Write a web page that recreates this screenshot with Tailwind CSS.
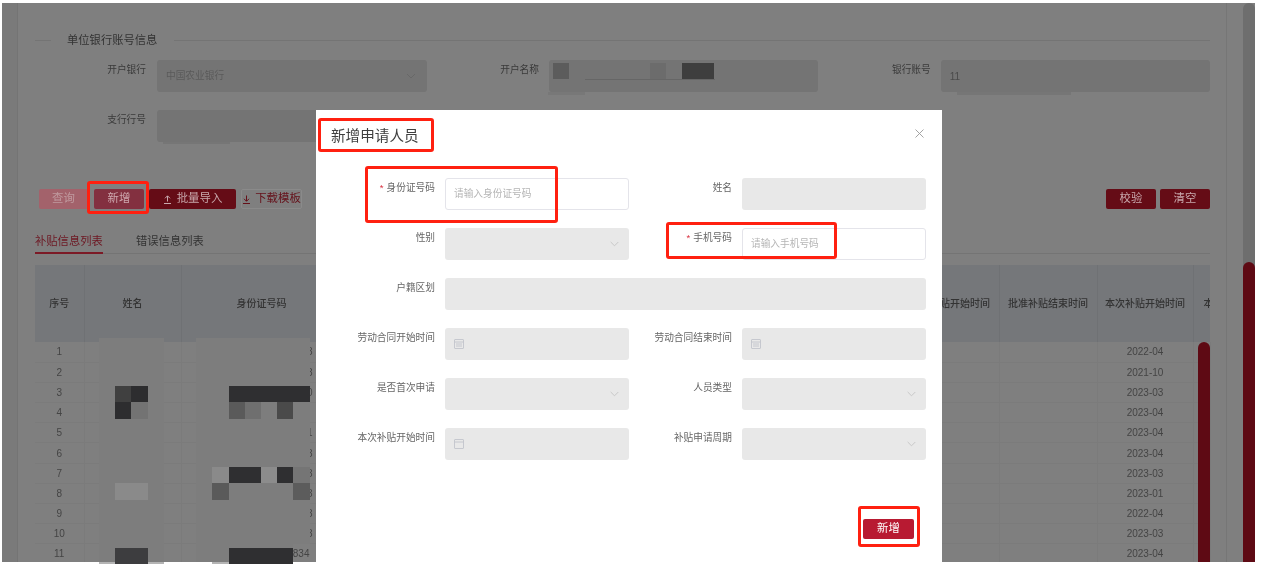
<!DOCTYPE html>
<html lang="zh-CN">
<head>
    <meta charset="UTF-8">
    <title>新增申请人员</title>
    <script src="https://cdn.jsdelivr.net/npm/@tailwindcss/browser@4"></script>
</head>
<body class="bg-white font-['Liberation_Sans','Noto_Sans_CJK_SC',sans-serif]">
<div class="relative w-[1280px] h-[577px] bg-white overflow-hidden blur-[0.6px]">

    <!-- dimmed page behind the dialog -->
    <div class="ml-[2px] pt-[3px]">
        <div class="flex w-[1253px] h-[559px] bg-[#7f7f7f] overflow-hidden text-[#3d3d3d]">
            <div class="w-[16px] shrink-0 bg-[#7a7a7a] border-r border-[#747474]"></div>

            <div class="w-[1208px] shrink-0 pl-[17px] pr-[16px] pt-[29px]">
                <div class="flex items-center h-[16px]">
                    <div class="w-[16px] h-px bg-[#747474]"></div>
                    <div class="w-[123px] pl-[16px] text-[11.3px] text-[#333]">单位银行账号信息</div>
                    <div class="flex-1 h-px bg-[#747474]"></div>
                </div>

                <div class="mt-[12px] grid grid-cols-[392px_391px_392px] h-[32px]">
                    <div class="flex">
                        <div class="w-[111px] pt-[3px] text-right text-[9.7px] leading-[14px] text-[#3a3a3a]">开户银行</div>
                        <div class="ml-[11px] w-[270px] h-[32px] rounded-[3px] bg-[#747474] flex items-center justify-between pl-[9px] pr-[11px] text-[9.7px] text-[#5a5a5a]">
                            中国农业银行
                            <svg class="w-[10px] h-[6px]" viewBox="0 0 10 6" fill="none" stroke="#646464" stroke-width="0.8"><path d="M1 1l4 4 4-4"/></svg>
                        </div>
                    </div>
                    <div class="flex">
                        <div class="w-[112px] pt-[3px] text-right text-[9.7px] leading-[14px] text-[#3a3a3a]">开户名称</div>
                        <div class="ml-[10px] w-[269px] h-[32px] rounded-[3px] bg-[#747474]"></div>
                    </div>
                    <div class="flex">
                        <div class="w-[113px] pt-[3px] text-right text-[9.7px] leading-[14px] text-[#3a3a3a]">银行账号</div>
                        <div class="ml-[10px] w-[270px] h-[32px] rounded-[3px] bg-[#747474] flex items-center pl-[9px] text-[10px] text-[#4a4a4a]">11</div>
                    </div>
                </div>

                <div class="mt-[18px] flex h-[32px]">
                    <div class="w-[111px] pt-[3px] text-right text-[9.7px] leading-[14px] text-[#3a3a3a]">支行行号</div>
                    <div class="ml-[11px] w-[270px] h-[32px] rounded-[3px] bg-[#747474]"></div>
                </div>

                <div class="mt-[47px] flex items-center h-[20px] text-[11.4px]">
                    <div class="ml-[4px] w-[49px] h-[20px] rounded-[2px] bg-[#a3626b] text-[#c09a9f] flex items-center justify-center">查询</div>
                    <div class="ml-[6px] w-[50px] h-[20px] rounded-[2px] bg-[#833040] text-[#cfa9b0] flex items-center justify-center">新增</div>
                    <div class="ml-[5px] w-[87px] h-[20px] rounded-[2px] bg-[#650c16] text-[#c9a9ad] flex items-center justify-center gap-[5px]">
                        <svg class="w-[9px] h-[9px]" viewBox="0 0 9 9" fill="none" stroke="#c9a9ad" stroke-width="1"><path d="M1 8.5h7M4.5 6.5V1M2 3.3l2.5-2.5L7 3.3"/></svg>
                        批量导入
                    </div>
                    <div class="ml-[5px] w-[61px] h-[20px] rounded-[2px] border border-[#8a8a8a] text-[#651019] flex items-center justify-center gap-[4px]">
                        <svg class="w-[9px] h-[9px]" viewBox="0 0 9 9" fill="none" stroke="#651019" stroke-width="1"><path d="M1 8.5h7M4.5 0.5V6M2 3.8l2.5 2.5L7 3.8"/></svg>
                        下载模板
                    </div>
                    <div class="ml-auto w-[50px] h-[20px] rounded-[2px] bg-[#650c16] text-[#c9a9ad] flex items-center justify-center">校验</div>
                    <div class="ml-[4px] w-[50px] h-[20px] rounded-[2px] bg-[#650c16] text-[#c9a9ad] flex items-center justify-center">清空</div>
                </div>

                <div class="mt-[22px] flex h-[23px] border-b border-[#747474] text-[11.3px]">
                    <div class="w-[68px] h-[23px] border-b-2 border-[#7c1a26] text-[#6d1722] leading-[20px]">补贴信息列表</div>
                    <div class="ml-[33px] text-[#333] leading-[20px]">错误信息列表</div>
                </div>

                <table class="mt-[11px] w-[1175px] table-fixed border-collapse text-center text-[10px] text-[#444]">
                    <colgroup>
                        <col class="w-[49px]"><col class="w-[97px]"><col class="w-[161px]">
                        <col class="w-[140px]"><col class="w-[140px]"><col class="w-[140px]"><col class="w-[139px]">
                        <col class="w-[98px]"><col class="w-[98px]"><col class="w-[96px]"><col class="w-[17px]">
                    </colgroup>
                    <thead class="bg-[#75777a] text-[#333]">
                        <tr class="h-[77px]">
                            <th class="border-r border-[#6f7174] font-medium">序号</th>
                            <th class="border-r border-[#6f7174] font-medium">姓名</th>
                            <th class="border-r border-[#6f7174] font-medium">身份证号码</th>
                            <th class="border-r border-[#6f7174]"></th>
                            <th class="border-r border-[#6f7174]"></th>
                            <th class="border-r border-[#6f7174]"></th>
                            <th class="border-r border-[#6f7174]"></th>
                            <th class="border-r border-[#6f7174] font-medium whitespace-nowrap">批准补贴开始时间</th>
                            <th class="border-r border-[#6f7174] font-medium whitespace-nowrap">批准补贴结束时间</th>
                            <th class="border-r border-[#6f7174] font-medium whitespace-nowrap">本次补贴开始时间</th>
                            <th class="font-medium overflow-hidden whitespace-nowrap text-left pl-[10px]">本</th>
                        </tr>
                    </thead>
                    <tbody class="[&_td]:border-r [&_td]:border-[#7b7b7b] [&_tr]:h-[20.2px] [&_tr]:border-b [&_tr]:border-[#7b7b7b]">
                        <tr><td>1</td><td></td><td class="text-right pr-[29px]">3</td><td></td><td></td><td></td><td></td><td></td><td></td><td>2022-04</td><td></td></tr>
                        <tr><td>2</td><td></td><td class="text-right pr-[29px]">8</td><td></td><td></td><td></td><td></td><td></td><td></td><td>2021-10</td><td></td></tr>
                        <tr><td>3</td><td></td><td class="text-right pr-[29px]">0</td><td></td><td></td><td></td><td></td><td></td><td></td><td>2023-03</td><td></td></tr>
                        <tr><td>4</td><td></td><td></td><td></td><td></td><td></td><td></td><td></td><td></td><td>2023-04</td><td></td></tr>
                        <tr><td>5</td><td></td><td class="text-right pr-[29px]">1</td><td></td><td></td><td></td><td></td><td></td><td></td><td>2023-04</td><td></td></tr>
                        <tr><td>6</td><td></td><td class="text-right pr-[29px]">3</td><td></td><td></td><td></td><td></td><td></td><td></td><td>2023-04</td><td></td></tr>
                        <tr><td>7</td><td></td><td class="text-right pr-[29px]">3</td><td></td><td></td><td></td><td></td><td></td><td></td><td>2023-03</td><td></td></tr>
                        <tr><td>8</td><td></td><td class="text-right pr-[29px]">3</td><td></td><td></td><td></td><td></td><td></td><td></td><td>2023-01</td><td></td></tr>
                        <tr><td>9</td><td></td><td class="text-right pr-[29px]">3</td><td></td><td></td><td></td><td></td><td></td><td></td><td>2022-04</td><td></td></tr>
                        <tr><td>10</td><td></td><td class="text-right pr-[29px]">3</td><td></td><td></td><td></td><td></td><td></td><td></td><td>2023-03</td><td></td></tr>
                        <tr><td>11</td><td></td><td class="text-right pr-[32px]">834</td><td></td><td></td><td></td><td></td><td></td><td></td><td>2023-04</td><td></td></tr>
                    </tbody>
                </table>
            </div>

            <div class="w-[17px] shrink-0 border-l border-[#767676]"></div>
            <div class="w-[12px] shrink-0 rounded-t-[6px] bg-[#6e6e6e] flex flex-col justify-end">
                <div class="h-[300px] rounded-t-[6px] bg-[#5e0a14]"></div>
            </div>
        </div>
    </div>

    <!-- table scrollbar thumb -->
    <div class="absolute left-[1198px] top-[342px] w-[12px] h-[220px] rounded-t-[6px] bg-[#5e0a14]"></div>

    <!-- masked values, laid over the page -->
    <div class="absolute left-[548px] top-[92px] w-[37px] h-[3px] bg-[#787878]"></div>
    <div class="absolute left-[553px] top-[63px] w-[16px] h-[16px] bg-[#5c5c5c]"></div>
    <div class="absolute left-[650px] top-[63px] w-[16px] h-[16px] bg-[#6c6c6c]"></div>
    <div class="absolute left-[682px] top-[63px] w-[32px] h-[16px] bg-[#3e3e3e]"></div>
    <div class="absolute left-[585px] top-[79px] w-[130px] h-px bg-[#666]"></div>
    <div class="absolute left-[163px] top-[142px] w-[67px] h-[2px] bg-[#767676]"></div>
    <div class="absolute left-[957px] top-[92px] w-[114px] h-[3px] bg-[#767676]"></div>

    <div class="absolute left-[99px] top-[338px] w-[65px] h-[224px] bg-[#7d7d7d]"></div>
    <div class="absolute left-[196px] top-[338px] w-[114px] h-[206px] bg-[#7d7d7d]"></div>
    <div class="absolute left-[196px] top-[544px] w-[97px] h-[18px] bg-[#7d7d7d]"></div>
    <div class="absolute left-[99px] top-[562px] w-[65px] h-[2px] bg-[#b4b4b4]"></div>
    <div class="absolute left-[212px] top-[562px] w-[81px] h-[2px] bg-[#b4b4b4]"></div>

    <div class="absolute left-[115px] top-[386px] w-[16px] h-[16px] bg-[#404040]"></div>
    <div class="absolute left-[131px] top-[386px] w-[17px] h-[16px] bg-[#2d2d2f]"></div>
    <div class="absolute left-[115px] top-[402px] w-[16px] h-[17px] bg-[#2d2d2f]"></div>
    <div class="absolute left-[131px] top-[402px] w-[17px] h-[17px] bg-[#737373]"></div>
    <div class="absolute left-[115px] top-[483px] w-[33px] h-[17px] bg-[#8a8a8a]"></div>
    <div class="absolute left-[115px] top-[548px] w-[33px] h-[16px] bg-[#3d3d3f]"></div>

    <div class="absolute left-[229px] top-[386px] w-[81px] h-[16px] bg-[#2f2f31]"></div>
    <div class="absolute left-[229px] top-[402px] w-[16px] h-[17px] bg-[#5a5a5a]"></div>
    <div class="absolute left-[245px] top-[402px] w-[16px] h-[17px] bg-[#6f6f6f]"></div>
    <div class="absolute left-[277px] top-[402px] w-[16px] h-[17px] bg-[#4a4a4a]"></div>
    <div class="absolute left-[212px] top-[467px] w-[17px] h-[16px] bg-[#8a8a8a]"></div>
    <div class="absolute left-[229px] top-[467px] w-[32px] h-[16px] bg-[#2f2f31]"></div>
    <div class="absolute left-[261px] top-[467px] w-[16px] h-[16px] bg-[#8c8c8c]"></div>
    <div class="absolute left-[277px] top-[467px] w-[16px] h-[16px] bg-[#2f2f31]"></div>
    <div class="absolute left-[293px] top-[467px] w-[17px] h-[16px] bg-[#757575]"></div>
    <div class="absolute left-[212px] top-[483px] w-[17px] h-[17px] bg-[#5a5a5a]"></div>
    <div class="absolute left-[293px] top-[483px] w-[17px] h-[17px] bg-[#5c5c5c]"></div>
    <div class="absolute left-[229px] top-[548px] w-[64px] h-[16px] bg-[#2f2f31]"></div>

    <!-- dialog -->
    <div class="absolute left-[316px] top-[110px] w-[626px] h-[452px] bg-white">
        <div class="flex justify-between pl-[15px] pr-[18px] pt-[16px] h-[68px]">
            <div class="text-[14.6px] leading-[20px] text-[#3f3f3f]">新增申请人员</div>
            <svg class="w-[9px] h-[9px] mt-[3px]" viewBox="0 0 9 9" fill="none" stroke="#9a9a9a" stroke-width="0.9"><path d="M.5.5l8 8M8.5.5l-8 8"/></svg>
        </div>

        <div class="grid grid-cols-[313px_297px] gap-y-[18px] text-[9.7px] leading-[14px] text-[#666]">
            <div class="flex">
                <div class="w-[119px] pt-[3px] text-right"><span class="text-[#d9303f] mr-[3px]">*</span>身份证号码</div>
                <div class="ml-[10px] w-[184px] h-[32px] rounded-[3px] border border-[#e4e4ea] flex items-center pl-[8px] text-[#b5b5b5]">请输入身份证号码</div>
            </div>
            <div class="flex">
                <div class="w-[103px] pt-[3px] text-right">姓名</div>
                <div class="ml-[10px] w-[184px] h-[32px] rounded-[3px] bg-[#e8e8e8]"></div>
            </div>

            <div class="flex">
                <div class="w-[119px] pt-[3px] text-right">性别</div>
                <div class="ml-[10px] w-[184px] h-[32px] rounded-[3px] bg-[#e8e8e8] flex items-center justify-end pr-[10px]">
                    <svg class="w-[9px] h-[6px]" viewBox="0 0 9 6" fill="none" stroke="#c4c4c4" stroke-width="0.9"><path d="M.7 1l3.8 3.8L8.3 1"/></svg>
                </div>
            </div>
            <div class="flex">
                <div class="w-[103px] pt-[3px] text-right"><span class="text-[#d9303f] mr-[3px]">*</span>手机号码</div>
                <div class="ml-[10px] w-[184px] h-[32px] rounded-[3px] border border-[#e4e4ea] flex items-center pl-[8px] text-[#b5b5b5]">请输入手机号码</div>
            </div>

            <div class="col-span-2 flex">
                <div class="w-[119px] pt-[3px] text-right">户籍区划</div>
                <div class="ml-[10px] w-[481px] h-[32px] rounded-[3px] bg-[#e8e8e8]"></div>
            </div>

            <div class="flex">
                <div class="w-[119px] pt-[3px] text-right">劳动合同开始时间</div>
                <div class="ml-[10px] w-[184px] h-[32px] rounded-[3px] bg-[#e8e8e8] flex items-center pl-[9px]">
                    <svg class="w-[10px] h-[10px]" viewBox="0 0 10 10" fill="none" stroke="#c2c4cc" stroke-width="0.9"><rect x=".5" y=".5" width="9" height="9" rx=".5"/><path d="M.5 3h9M2 5h6M2 7h6"/></svg>
                </div>
            </div>
            <div class="flex">
                <div class="w-[103px] pt-[3px] text-right">劳动合同结束时间</div>
                <div class="ml-[10px] w-[184px] h-[32px] rounded-[3px] bg-[#e8e8e8] flex items-center pl-[9px]">
                    <svg class="w-[10px] h-[10px]" viewBox="0 0 10 10" fill="none" stroke="#c2c4cc" stroke-width="0.9"><rect x=".5" y=".5" width="9" height="9" rx=".5"/><path d="M.5 3h9M2 5h6M2 7h6"/></svg>
                </div>
            </div>

            <div class="flex">
                <div class="w-[119px] pt-[3px] text-right">是否首次申请</div>
                <div class="ml-[10px] w-[184px] h-[32px] rounded-[3px] bg-[#e8e8e8] flex items-center justify-end pr-[10px]">
                    <svg class="w-[9px] h-[6px]" viewBox="0 0 9 6" fill="none" stroke="#c4c4c4" stroke-width="0.9"><path d="M.7 1l3.8 3.8L8.3 1"/></svg>
                </div>
            </div>
            <div class="flex">
                <div class="w-[103px] pt-[3px] text-right">人员类型</div>
                <div class="ml-[10px] w-[184px] h-[32px] rounded-[3px] bg-[#e8e8e8] flex items-center justify-end pr-[10px]">
                    <svg class="w-[9px] h-[6px]" viewBox="0 0 9 6" fill="none" stroke="#c4c4c4" stroke-width="0.9"><path d="M.7 1l3.8 3.8L8.3 1"/></svg>
                </div>
            </div>

            <div class="flex">
                <div class="w-[119px] pt-[3px] text-right">本次补贴开始时间</div>
                <div class="ml-[10px] w-[184px] h-[32px] rounded-[3px] bg-[#e8e8e8] flex items-center pl-[9px]">
                    <svg class="w-[10px] h-[10px]" viewBox="0 0 10 10" fill="none" stroke="#c2c4cc" stroke-width="0.9"><rect x=".5" y=".5" width="9" height="9" rx=".5"/><path d="M.5 3h9"/></svg>
                </div>
            </div>
            <div class="flex">
                <div class="w-[103px] pt-[3px] text-right">补贴申请周期</div>
                <div class="ml-[10px] w-[184px] h-[32px] rounded-[3px] bg-[#e8e8e8] flex items-center justify-end pr-[10px]">
                    <svg class="w-[9px] h-[6px]" viewBox="0 0 9 6" fill="none" stroke="#c4c4c4" stroke-width="0.9"><path d="M.7 1l3.8 3.8L8.3 1"/></svg>
                </div>
            </div>
        </div>

        <div class="mt-[59px] mr-[28px] flex justify-end">
            <div class="w-[51px] h-[20px] rounded-[2px] bg-[#b81a32] text-white text-[11.4px] flex items-center justify-center">新增</div>
        </div>
    </div>

    <!-- red annotation boxes -->
    <div class="absolute left-[87px] top-[181px] w-[62px] h-[33px] rounded-[3px] border-[3px] border-[#ff2010]"></div>
    <div class="absolute left-[318px] top-[118px] w-[116px] h-[34px] rounded-[3px] border-[3px] border-[#ff2010]"></div>
    <div class="absolute left-[365px] top-[166px] w-[193px] h-[57px] rounded-[3px] border-[3px] border-[#ff2010]"></div>
    <div class="absolute left-[666px] top-[222px] w-[171px] h-[37px] rounded-[3px] border-[3px] border-[#ff2010]"></div>
    <div class="absolute left-[858px] top-[506px] w-[62px] h-[41px] rounded-[3px] border-[3px] border-[#ff2010]"></div>
</div>
</body>
</html>
